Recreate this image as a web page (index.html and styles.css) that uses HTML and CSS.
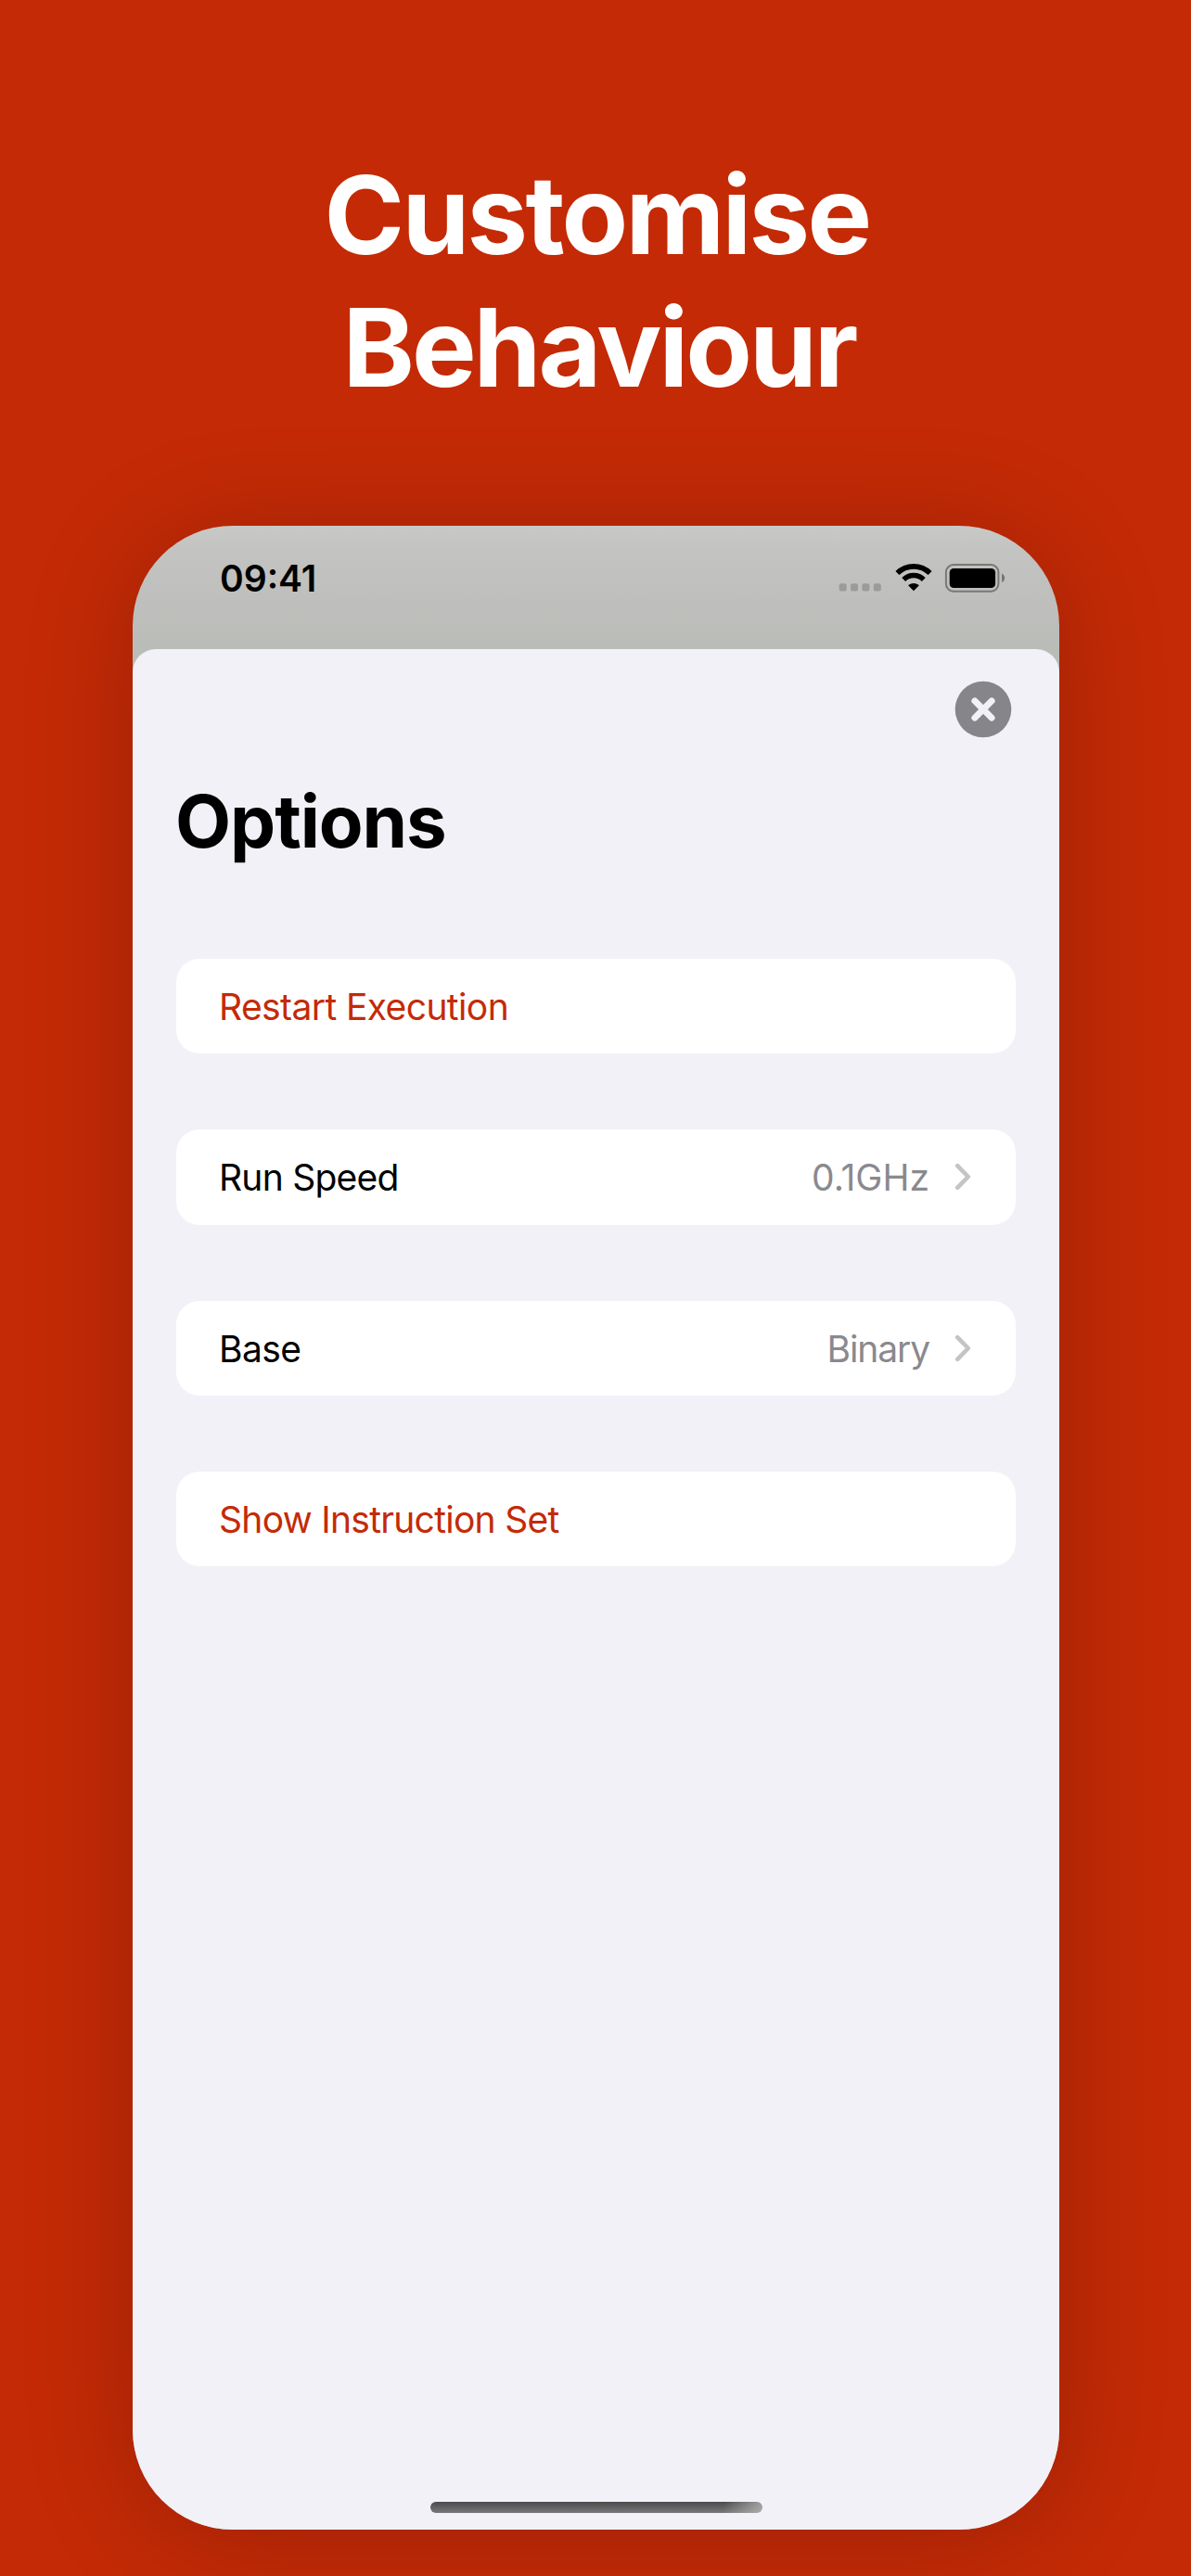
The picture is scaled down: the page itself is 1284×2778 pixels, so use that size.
FILE: index.html
```html
<!DOCTYPE html>
<html lang="en">
<head>
<meta charset="utf-8">
<title>Customise Behaviour</title>
<link rel="stylesheet" href="styles.css">
</head>
<body>
<main class="poster">
  <h1 class="headline">
    <span class="headline-first">Customise</span>
    <span class="headline-second">Behaviour</span>
  </h1>
  <section class="phone">
    <div class="status">
      <span class="time">09:41</span>
      <div class="status-icons">
        <svg class="signal" viewBox="0 0 46 9">
          <rect x="0.7" y="0.3" width="8" height="8.3" rx="2"/>
          <rect x="13" y="0.3" width="8" height="8.3" rx="2"/>
          <rect x="25.4" y="0.3" width="8" height="8.3" rx="2"/>
          <rect x="37.8" y="0.3" width="8" height="8.3" rx="2"/>
        </svg>
        <svg class="wifi" viewBox="0 0 40 30">
          <path class="wave" d="M2.4 10.1A25 25 0 0 1 37.6 10.1"/>
          <path class="wave" d="M9.2 16.9A15.4 15.4 0 0 1 30.8 16.9"/>
          <path d="M20 29.3L14.3 23.5Q14.3 23.1 14.7 22.8A8.4 8.4 0 0 1 25.3 22.8Q25.7 23.1 25.7 23.5Z"/>
        </svg>
        <svg class="battery" viewBox="0 0 66 31">
          <rect class="case" x="1.9" y="1.1" width="56.5" height="28.6" rx="8"/>
          <rect x="5.7" y="4.9" width="49.4" height="21.2" rx="4.4"/>
          <path class="nub" d="M62 10.5C64 11.4 65.2 13.2 65.2 15.3S64 19.2 62 20.1Z"/>
        </svg>
      </div>
    </div>
    <div class="sheet">
      <div class="toolbar">
        <svg class="close" viewBox="0 0 62 62">
          <circle cx="31" cy="31" r="30.3"/>
          <path d="M21.9 21.9L40.1 40.1M40.1 21.9L21.9 40.1"/>
        </svg>
      </div>
      <h2 class="title">Options</h2>
      <div class="groups">
        <div class="row action"><span class="restart">Restart Execution</span></div>
        <div class="row">
          <span class="speed">Run Speed</span>
          <span class="value">0.1GHz</span>
          <svg class="chevron" viewBox="0 0 18 30"><path d="M3.2 3.2L14.8 15L3.2 26.8"/></svg>
        </div>
        <div class="row">
          <span class="base">Base</span>
          <span class="value binary">Binary</span>
          <svg class="chevron" viewBox="0 0 18 30"><path d="M3.2 3.2L14.8 15L3.2 26.8"/></svg>
        </div>
        <div class="row action"><span class="instructions">Show Instruction Set</span></div>
      </div>
      <div class="home-bar"></div>
    </div>
  </section>
</main>
</body>
</html>
```
FILE: styles.css
```css
* {
  box-sizing: border-box;
}

body {
  margin: 0;
  background: #c42a06;
  font-family: Inter, "Liberation Sans", sans-serif;
}

.poster {
  display: flex;
  flex-direction: column;
  width: 1284px;
  height: 2778px;
  overflow: hidden;
}

.headline {
  display: flex;
  flex-direction: column;
  align-items: center;
  flex: none;
  height: 567px;
  margin: 0;
  padding-top: 160px;
  color: #fff;
  font-size: 117px;
  font-weight: 700;
  line-height: 143px;
}

.headline-first {
  padding-left: 3px;
  letter-spacing: -2.7px;
}

.headline-second {
  padding-left: 8px;
  letter-spacing: -3px;
}

.phone {
  display: flex;
  flex-direction: column;
  flex: none;
  width: 999px;
  height: 2161px;
  margin-left: 143px;
  border-radius: 108px;
  background: linear-gradient(#c8c8c6, #c3c3c1 28px, #babcb8 133px);
  box-shadow: 0 8px 120px rgba(0, 0, 0, 0.2);
  overflow: hidden;
}

.status {
  display: flex;
  justify-content: space-between;
  flex: none;
  height: 133px;
  padding: 41px 58px 0 94px;
}

.time {
  height: 31px;
  font-size: 39px;
  font-weight: 600;
  line-height: 31px;
}

.status-icons {
  display: flex;
  align-items: flex-end;
  height: 30px;
}

.signal {
  width: 46px;
  height: 9px;
  margin-right: 14px;
  fill: #9b9b99;
}

.wifi {
  width: 40px;
  height: 30px;
  margin-right: 13px;
}

.signal + .wifi {
  margin-left: 1px;
}

.wave {
  fill: none;
  stroke: #000;
  stroke-width: 5.6;
}

.battery {
  width: 66px;
  height: 31px;
  margin-bottom: -1px;
}

.case {
  fill: none;
  stroke: #777776;
  stroke-width: 2;
}

.nub {
  fill: #777776;
}

.sheet {
  display: flex;
  flex-direction: column;
  flex: 1;
  padding: 0 47px;
  border-radius: 25px 25px 0 0;
  background: #f2f1f7;
}

.toolbar {
  display: flex;
  justify-content: flex-end;
  height: 132px;
  padding: 34.3px 4.4px 0 0;
}

.close {
  width: 62px;
  height: 62px;
  fill: #86858a;
}

.close path {
  stroke: #f2f1f7;
  stroke-width: 7;
  stroke-linecap: round;
}

.title {
  height: 202px;
  margin: 0 0 0 -1px;
  font-size: 78px;
  font-weight: 700;
  line-height: 108px;
  letter-spacing: -1.05px;
}

.groups {
  display: flex;
  flex-direction: column;
  gap: 82px;
}

.row {
  display: flex;
  align-items: center;
  height: 102.3px;
  padding: 2px 45px 0 46px;
  border-radius: 25px;
  background: #fff;
  font-size: 39px;
  line-height: 50px;
}

.action {
  color: #c42a06;
}

.restart {
  letter-spacing: -0.6px;
}

.speed {
  letter-spacing: -0.75px;
}

.base {
  letter-spacing: -0.6px;
}

.instructions {
  letter-spacing: -0.7px;
}

.value {
  margin-left: auto;
  color: #8a898e;
}

.binary {
  letter-spacing: -1.1px;
}

.chevron {
  width: 18px;
  height: 30px;
  margin: 0 3px 2px 27px;
  fill: none;
  stroke: #c4c4c6;
  stroke-width: 4.6;
  stroke-linecap: round;
  stroke-linejoin: round;
}

.home-bar {
  width: 358px;
  height: 12px;
  margin: auto auto 18px 274px;
  border-radius: 6px;
  background:
    linear-gradient(100deg, transparent 88%, rgba(190, 190, 190, 0.75)),
    linear-gradient(#4b4b4c, #78787a);
}
```
